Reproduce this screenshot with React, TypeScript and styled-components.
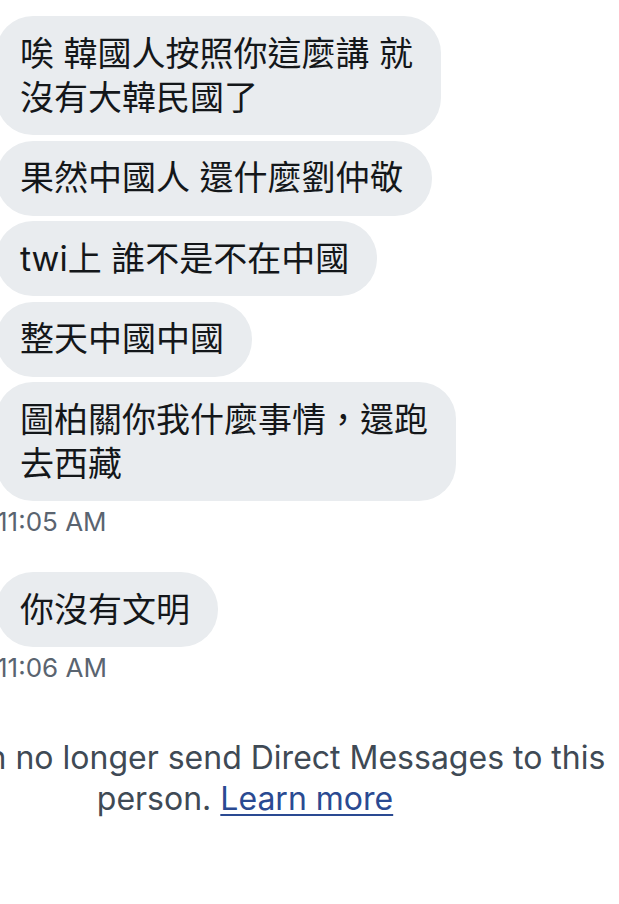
import React from 'react'
import styled, { createGlobalStyle } from 'styled-components'

const GlobalStyle = createGlobalStyle`
  html, body {
    margin: 0;
    padding: 0;
    background: #ffffff;
    overflow: hidden;
  }
  body {
    font-family: Inter, "Noto Sans CJK TC", sans-serif;
    -webkit-font-smoothing: antialiased;
  }
`

type Message = { lines: string[] }
type Group = { messages: Message[]; time: string }

const groups: Group[] = [
  {
    messages: [
      { lines: ['唉 韓國人按照你這麼講 就', '沒有大韓民國了'] },
      { lines: ['果然中國人 還什麼劉仲敬'] },
      { lines: ['twi上 誰不是不在中國'] },
      { lines: ['整天中國中國'] },
      { lines: ['圖柏關你我什麼事情，還跑', '去西藏'] },
    ],
    time: '11:05 AM',
  },
  {
    messages: [{ lines: ['你沒有文明'] }],
    time: '11:06 AM',
  },
]

// the screenshot is cropped from a wider screen, so the thread starts off the left edge
const Thread = styled.main`
  width: 748px;
  margin-left: -129px;
  padding-top: 16px;
  display: flex;
  flex-direction: column;
`

const MessageGroup = styled.section`
  display: flex;
  flex-direction: column;
  align-items: flex-start;
  padding-left: 125px;
  margin-bottom: 35px;

  &:last-of-type {
    margin-bottom: 54px;
  }
`

const Bubbles = styled.div`
  display: flex;
  flex-direction: column;
  align-items: flex-start;
  gap: 5.5px;
`

const Bubble = styled.div`
  background: #e9ecef;
  color: #14171a;
  border-radius: 37px;
  padding: 15.5px 28px 15.5px 24px;
  font-size: 34px;
  line-height: 44px;
  white-space: nowrap;
`

const Time = styled.div`
  margin-top: 6px;
  margin-left: 1px;
  font-size: 26px;
  line-height: 30px;
  color: #5a6470;
`

const Notice = styled.p`
  margin: 0;
  text-align: center;
  font-size: 32px;
  line-height: 41px;
  color: #3f4a55;
  padding: 0 6px;
`

const LearnMore = styled.a`
  color: #2a4a92;
  text-decoration: underline;
  text-underline-offset: 4px;
  text-decoration-thickness: 2px;
`

export default function App() {
  return (
    <>
      <GlobalStyle />
      <Thread>
        {groups.map((group, gi) => (
          <MessageGroup key={gi}>
            <Bubbles>
              {group.messages.map((msg, mi) => (
                <Bubble key={mi}>
                  {msg.lines.map((line, li) => (
                    <React.Fragment key={li}>
                      {li > 0 && <br />}
                      {line}
                    </React.Fragment>
                  ))}
                </Bubble>
              ))}
            </Bubbles>
            <Time>{group.time}</Time>
          </MessageGroup>
        ))}
        <Notice>
          You can no longer send Direct Messages to this person.{' '}
          <LearnMore href="#">Learn more</LearnMore>
        </Notice>
      </Thread>
    </>
  )
}
